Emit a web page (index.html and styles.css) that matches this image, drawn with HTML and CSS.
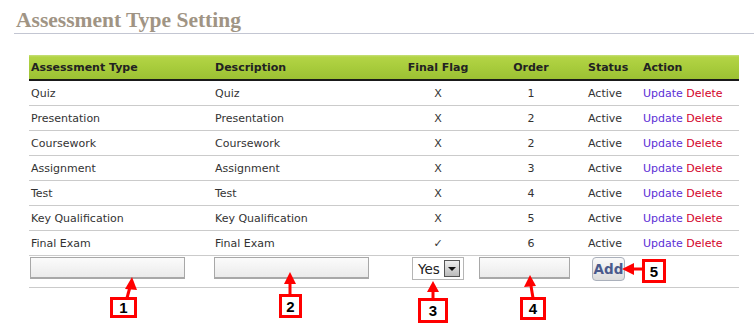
FILE: index.html
```html
<!DOCTYPE html>
<html lang="en">
<head>
    <meta charset="UTF-8">
    <title>Assessment Type Setting</title>
    <link rel="stylesheet" href="styles.css">
</head>
<body>
    <div class="page">
        <h1 class="title">Assessment Type Setting</h1>

        <table class="grid">
            <colgroup>
                <col class="c-type"><col class="c-desc"><col class="c-flag">
                <col class="c-order"><col class="c-status"><col class="c-action">
            </colgroup>
            <thead>
                <tr>
                    <th>Assessment Type</th>
                    <th>Description</th>
                    <th class="mid">Final Flag</th>
                    <th class="mid">Order</th>
                    <th>Status</th>
                    <th>Action</th>
                </tr>
            </thead>
            <tbody>
                <tr><td>Quiz</td><td>Quiz</td><td class="mid">X</td><td class="mid">1</td><td>Active</td><td><a class="upd">Update</a> <a class="del">Delete</a></td></tr>
                <tr><td>Presentation</td><td>Presentation</td><td class="mid">X</td><td class="mid">2</td><td>Active</td><td><a class="upd">Update</a> <a class="del">Delete</a></td></tr>
                <tr><td>Coursework</td><td>Coursework</td><td class="mid">X</td><td class="mid">2</td><td>Active</td><td><a class="upd">Update</a> <a class="del">Delete</a></td></tr>
                <tr><td>Assignment</td><td>Assignment</td><td class="mid">X</td><td class="mid">3</td><td>Active</td><td><a class="upd">Update</a> <a class="del">Delete</a></td></tr>
                <tr><td>Test</td><td>Test</td><td class="mid">X</td><td class="mid">4</td><td>Active</td><td><a class="upd">Update</a> <a class="del">Delete</a></td></tr>
                <tr><td>Key Qualification</td><td>Key Qualification</td><td class="mid">X</td><td class="mid">5</td><td>Active</td><td><a class="upd">Update</a> <a class="del">Delete</a></td></tr>
                <tr><td>Final Exam</td><td>Final Exam</td><td class="mid">✓</td><td class="mid">6</td><td>Active</td><td><a class="upd">Update</a> <a class="del">Delete</a></td></tr>
                <tr class="add-row">
                    <td><input class="box wide" type="text"></td>
                    <td><input class="box wide" type="text"></td>
                    <td class="mid">
                        <span class="pick">Yes<span class="pick-btn"><span class="tri"></span></span></span>
                    </td>
                    <td class="mid"><input class="box short" type="text"></td>
                    <td colspan="2"><button class="add">Add</button></td>
                </tr>
            </tbody>
        </table>

        <!-- callouts -->
        <svg class="arrows" width="754" height="328" viewBox="0 0 754 328">
            <g stroke="#f00" stroke-width="3" fill="none">
                <line x1="127" y1="298" x2="130" y2="287"/>
                <line x1="290" y1="295" x2="290" y2="282"/>
                <line x1="433" y1="299" x2="433" y2="290"/>
                <line x1="533" y1="298" x2="531" y2="286"/>
                <line x1="643" y1="269" x2="632" y2="269"/>
            </g>
            <g fill="#f00">
                <polygon points="132,277 125,289 137,290"/>
                <polygon points="290,272 284,284 296,284"/>
                <polygon points="433,281 427,292 439,292"/>
                <polygon points="530,275 524,287 536,286"/>
                <polygon points="622,269 634,263 634,275"/>
            </g>
        </svg>
        <div class="tag t1">1</div>
        <div class="tag t2">2</div>
        <div class="tag t3">3</div>
        <div class="tag t4">4</div>
        <div class="tag t5">5</div>
    </div>
</body>
</html>
```

FILE: styles.css
```css
body {
    margin: 0;
    background: #fff;
    font-family: "DejaVu Sans", Verdana, sans-serif;
    font-size: 11px;
    color: #333;
}
.page { position: relative; width: 754px; height: 328px; overflow: hidden; }

.title {
    margin: 0 0 21px 14px;
    padding: 9px 0 0 2px;
    height: 34px;
    box-sizing: border-box;
    border-bottom: 1px solid #c3c6d2;
    font-family: "Liberation Serif", "Times New Roman", serif;
    font-size: 21.5px;
    line-height: 22px;
    font-weight: bold;
    color: #a09484;
}

.grid {
    margin-left: 29px;
    width: 710px;
    border-collapse: collapse;
    table-layout: fixed;
}
.c-type { width: 184px; }
.c-desc { width: 187px; }
.c-flag { width: 76px; }
.c-order { width: 110px; }
.c-status { width: 55px; }
.c-action { width: 98px; }

.grid th {
    height: 24px;
    padding: 0 2px;
    text-align: left;
    font-weight: bold;
    color: #222;
    background: linear-gradient(#c6e07c 0, #b3d445 2px, #a8cc3c 50%, #9cc133 100%);
    border-bottom: 2px solid #1a1a1a;
}
.grid td {
    height: 24px;
    padding: 0 2px;
    border-bottom: 1px solid #cbcbcb;
    white-space: nowrap;
}
.grid .mid { text-align: center; }

.upd { color: #5b2fd6; }
.del { color: #d4002a; }

.add-row td { height: 30px; vertical-align: top; padding-top: 1px; }

.box {
    display: block;
    height: 22px;
    box-sizing: border-box;
    border: 1px solid #a8a8a8;
    border-width: 1px 1px 2px 1px;
    background: linear-gradient(#fbfbfb, #ebebeb);
    margin: 0;
    padding: 0 3px;
}
.wide { width: 155px; margin-left: -1px; }
.short { width: 91px; margin-left: 1px; }

.pick {
    display: inline-flex;
    align-items: center;
    gap: 4px;
    height: 23px;
    width: 52px;
    box-sizing: border-box;
    padding: 0 2px 0 5px;
    border: 1px solid #b5b5b5;
    background: #fff;
    font-family: "DejaVu Sans", Verdana, sans-serif;
    font-size: 13.5px;
    color: #222;
}
.pick-btn {
    display: flex;
    align-items: center;
    justify-content: center;
    width: 14px;
    height: 15px;
    border: 1px solid #555;
    background: linear-gradient(#eee, #bbb);
}
.tri {
    width: 0;
    height: 0;
    border-left: 4px solid transparent;
    border-right: 4px solid transparent;
    border-top: 4px solid #111;
}

.add {
    display: block;
    margin-left: 4px;
    width: 33px;
    height: 24px;
    padding: 0;
    border: 1px solid #aab0bb;
    border-radius: 4px;
    background: linear-gradient(#fafafa, #dcdcdc);
    font-family: "DejaVu Sans", Verdana, sans-serif;
    font-size: 13.5px;
    font-weight: bold;
    color: #4a5a8c;
}

.arrows { position: absolute; left: 0; top: 0; }
.tag {
    position: absolute;
    box-sizing: border-box;
    border: 3px solid #f00;
    background: #fff;
    font-family: "Liberation Sans", Arial, sans-serif;
    font-weight: bold;
    font-size: 15px;
    color: #000;
    display: flex;
    align-items: center;
    justify-content: center;
}
.t1 { left: 110px; top: 297px; width: 27px; height: 21px; }
.t2 { left: 279px; top: 294px; width: 23px; height: 24px; }
.t3 { left: 418px; top: 298px; width: 30px; height: 25px; }
.t4 { left: 520px; top: 297px; width: 26px; height: 23px; }
.t5 { left: 642px; top: 259px; width: 24px; height: 24px; }
```
